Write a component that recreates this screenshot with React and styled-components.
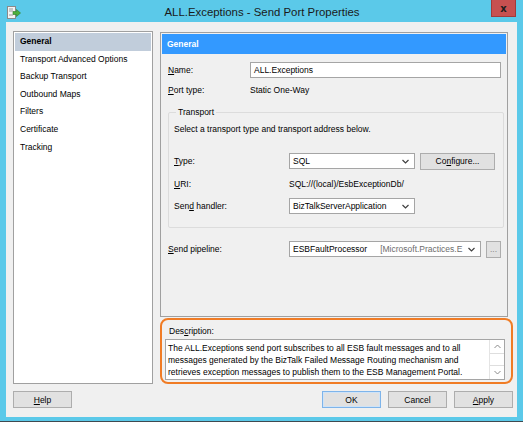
import React from 'react';
import styled, { createGlobalStyle } from 'styled-components';

const GlobalStyle = createGlobalStyle`
  html, body {
    margin: 0;
    padding: 0;
    background: #5bc9e9;
  }
  body {
    font-family: 'Liberation Sans', Arial, sans-serif;
    font-size: 8.5px;
    color: #000;
  }
`;

const Window = styled.div`
  width: 523px;
  height: 422px;
  box-sizing: border-box;
  background: #5bc9e9;
  padding: 0 6px 4px 6px;
  border-bottom: 1px solid #3f4a50;
  display: flex;
  flex-direction: column;
`;

const TitleBar = styled.div`
  height: 22px;
  display: flex;
  align-items: center;
  position: relative;
  flex-shrink: 0;
`;

const TitleIcon = styled.svg`
  width: 14px;
  height: 13px;
  margin: 2px 0 0 1px;
`;

const TitleText = styled.div`
  flex: 1;
  text-align: center;
  font-size: 11.4px;
  color: #1a1a1a;
  margin-top: 2px;
  padding-right: 14px;
`;

const CloseButton = styled.div`
  position: absolute;
  right: 1px;
  top: 0;
  width: 25px;
  height: 17px;
  background: #c75050;
  border: 1px solid #a23a3a;
  border-top: none;
  box-sizing: border-box;
  display: flex;
  align-items: center;
  justify-content: center;
  font-family: 'DejaVu Sans', sans-serif;
  font-weight: bold;
  font-size: 10px;
  color: #1e1e1e;
`;

const Content = styled.div`
  flex: 1;
  background: #f0f0f0;
  display: flex;
  flex-direction: column;
  padding: 9px 4px 0 7px;
`;

const MainRow = styled.div`
  display: flex;
  gap: 7px;
  height: 353px;
`;

const NavList = styled.div`
  width: 140px;
  box-sizing: border-box;
  background: #fff;
  border: 1px solid #a0a0a0;
  padding: 1px;
  display: flex;
  flex-direction: column;
`;

const NavItem = styled.div`
  height: 17.6px;
  line-height: 17.6px;
  padding-left: 5px;
  background: ${(p) => (p.$active ? '#c1cddb' : 'transparent')};
  font-weight: ${(p) => (p.$active ? 'bold' : 'normal')};
  white-space: nowrap;
`;

const RightColumn = styled.div`
  flex: 1;
  display: flex;
  flex-direction: column;
  padding-top: 1px;
`;

const PropsPanel = styled.div`
  width: 348px;
  height: 286px;
  box-sizing: border-box;
  border: 1px solid #a0a0a0;
  padding: 1px;
  display: flex;
  flex-direction: column;
`;

const PanelHeader = styled.div`
  height: 20px;
  background: #3399ff;
  color: #fff;
  font-weight: bold;
  line-height: 20px;
  padding-left: 5px;
  flex-shrink: 0;
`;

const PanelBody = styled.div`
  padding: 8px 5px 0 6px;
  display: flex;
  flex-direction: column;
`;

const Row = styled.div`
  display: flex;
  align-items: center;
  height: 16px;
  margin-top: ${(p) => p.$mt || 0}px;
`;

const Label = styled.div`
  width: ${(p) => p.$w}px;
  flex-shrink: 0;
  white-space: nowrap;
`;

const Value = styled.div`
  white-space: nowrap;
`;

const TextInput = styled.div`
  flex: 1;
  height: 16px;
  box-sizing: border-box;
  background: #fff;
  border: 1px solid #a5a5a5;
  line-height: 14px;
  padding-left: 3px;
`;

const SelectBox = styled.div`
  width: ${(p) => p.$w}px;
  height: 16px;
  box-sizing: border-box;
  background: #fff;
  border: 1px solid #a5a5a5;
  display: flex;
  align-items: center;
  padding: 0 5px 0 3px;
  white-space: nowrap;
`;

const SelectText = styled.span`
  flex: 1;
  display: flex;
`;

const Muted = styled.span`
  color: #6d6d6d;
  margin-left: ${(p) => p.$ml || 0}px;
`;

const Chevron = styled.svg`
  width: 7px;
  height: 5px;
  flex-shrink: 0;
  margin-left: 4px;
`;

const Button = styled.div`
  width: ${(p) => p.$w}px;
  height: 17px;
  box-sizing: border-box;
  background: #e1e1e1;
  border: 1px solid ${(p) => (p.$default ? '#7eb4ea' : '#adadad')};
  box-shadow: ${(p) => (p.$default ? 'inset 0 0 0 1px #cfe3f7' : 'none')};
  display: flex;
  align-items: center;
  justify-content: center;
  margin-left: ${(p) => p.$ml || 0}px;
  color: ${(p) => (p.$faint ? '#888' : '#000')};
`;

const Group = styled.fieldset`
  margin: 8px 0 0 0;
  padding: 5px 0 13px 5px;
  width: 336px;
  box-sizing: border-box;
  border: 1px solid #dcdcdc;
  border-radius: 2px;
`;

const Legend = styled.legend`
  padding: 0 2px;
  margin-left: 2px;
  line-height: 12px;
`;

const GroupText = styled.div`
  line-height: 12px;
  margin-bottom: 18px;
`;

const DescBox = styled.div`
  margin-top: 1px;
  height: 66px;
  box-sizing: border-box;
  border: 2px solid #f07c25;
  border-radius: 8px;
  padding: 5px 6px 0 3px;
  display: flex;
  flex-direction: column;
`;

const DescLabel = styled.div`
  padding-left: 4px;
  line-height: 12px;
  margin-bottom: 2px;
`;

const TextArea = styled.div`
  height: 41px;
  box-sizing: border-box;
  background: #fff;
  border: 1px solid #a5a5a5;
  display: flex;
`;

const TextAreaText = styled.div`
  flex: 1;
  padding: 2px 0 0 2px;
  line-height: 12px;
  white-space: nowrap;
`;

const ScrollBar = styled.div`
  width: 14px;
  display: flex;
  flex-direction: column;
  border-left: 1px solid #e4e4e4;
`;

const ScrollPart = styled.div`
  flex: ${(p) => (p.$grow ? 1 : '0 0 13px')};
  box-sizing: border-box;
  border: ${(p) => (p.$grow ? '1px solid #dedede' : 'none')};
  border-left: none;
  border-right: none;
  display: flex;
  align-items: center;
  justify-content: center;
`;

const ButtonRow = styled.div`
  display: flex;
  align-items: center;
  margin-top: 7px;
`;

const Spacer = styled.div`
  flex: 1;
`;

const U = styled.span`
  text-decoration: underline;
`;

const navItems = [
  'General',
  'Transport Advanced Options',
  'Backup Transport',
  'Outbound Maps',
  'Filters',
  'Certificate',
  'Tracking',
];

const Down = ({ color = '#404040' }) => (
  <Chevron viewBox="0 0 7 5">
    <path d="M0.5 1 L3.5 4 L6.5 1" fill="none" stroke={color} strokeWidth="1.2" />
  </Chevron>
);

export default function App() {
  return (
    <>
      <GlobalStyle />
      <Window>
        <TitleBar>
          <TitleIcon viewBox="0 0 14 13">
            <rect x="0.5" y="0.5" width="8" height="12" fill="#f4f4f4" stroke="#8a8a8a" />
            <line x1="2" y1="3" x2="6" y2="3" stroke="#9a9a9a" />
            <line x1="2" y1="5" x2="6" y2="5" stroke="#9a9a9a" />
            <line x1="2" y1="9" x2="6" y2="9" stroke="#9a9a9a" />
            <path d="M6 5.5 H9.5 V3.5 L13.5 7 L9.5 10.5 V8.5 H6 Z" fill="#4caf3c" stroke="#2f7d24" strokeWidth="0.6" />
          </TitleIcon>
          <TitleText>ALL.Exceptions - Send Port Properties</TitleText>
          <CloseButton>x</CloseButton>
        </TitleBar>
        <Content>
          <MainRow>
            <NavList>
              {navItems.map((item, i) => (
                <NavItem key={item} $active={i === 0}>
                  {item}
                </NavItem>
              ))}
            </NavList>
            <RightColumn>
              <PropsPanel>
                <PanelHeader>General</PanelHeader>
                <PanelBody>
                  <Row>
                    <Label $w={82}>
                      <U>N</U>ame:
                    </Label>
                    <TextInput>ALL.Exceptions</TextInput>
                  </Row>
                  <Row $mt={4}>
                    <Label $w={82}>
                      <U>P</U>ort type:
                    </Label>
                    <Value>Static One-Way</Value>
                  </Row>
                  <Group>
                    <Legend>Transport</Legend>
                    <GroupText>Select a transport type and transport address below.</GroupText>
                    <Row>
                      <Label $w={115}>
                        <U>T</U>ype:
                      </Label>
                      <SelectBox $w={126}>
                        <SelectText>SQL</SelectText>
                        <Down />
                      </SelectBox>
                      <Button $w={75} $ml={5}>
                        Co<U>n</U>figure...
                      </Button>
                    </Row>
                    <Row $mt={7}>
                      <Label $w={115}>
                        <U>U</U>RI:
                      </Label>
                      <Value>SQL://(local)/EsbExceptionDb/</Value>
                    </Row>
                    <Row $mt={6}>
                      <Label $w={115}>
                        Sen<U>d</U> handler:
                      </Label>
                      <SelectBox $w={126}>
                        <SelectText>BizTalkServerApplication</SelectText>
                        <Down />
                      </SelectBox>
                    </Row>
                  </Group>
                  <Row $mt={13}>
                    <Label $w={121}>
                      <U>S</U>end pipeline:
                    </Label>
                    <SelectBox $w={192}>
                      <SelectText>
                        ESBFaultProcessor
                        <Muted $ml={13}>[Microsoft.Practices.E</Muted>
                      </SelectText>
                      <Down />
                    </SelectBox>
                    <Button $w={15} $ml={5} $faint>
                      ...
                    </Button>
                  </Row>
                </PanelBody>
              </PropsPanel>
              <DescBox>
                <DescLabel>
                  Des<U>c</U>ription:
                </DescLabel>
                <TextArea>
                  <TextAreaText>
                    The ALL.Exceptions send port subscribes to all ESB fault messages and to all
                    <br />
                    messages generated by the BizTalk Failed Message Routing mechanism and
                    <br />
                    retrieves exception messages to publish them to the ESB Management Portal.
                  </TextAreaText>
                  <ScrollBar>
                    <ScrollPart>
                      <Chevron viewBox="0 0 7 5" style={{ margin: 0 }}>
                        <path d="M0.5 4 L3.5 1 L6.5 4" fill="none" stroke="#8a8a8a" strokeWidth="1" />
                      </Chevron>
                    </ScrollPart>
                    <ScrollPart $grow />
                    <ScrollPart>
                      <Chevron viewBox="0 0 7 5" style={{ margin: 0 }}>
                        <path d="M0.5 1 L3.5 4 L6.5 1" fill="none" stroke="#8a8a8a" strokeWidth="1" />
                      </Chevron>
                    </ScrollPart>
                  </ScrollBar>
                </TextArea>
              </DescBox>
            </RightColumn>
          </MainRow>
          <ButtonRow>
            <Button $w={59}>
              <U>H</U>elp
            </Button>
            <Spacer />
            <Button $w={59} $default>
              OK
            </Button>
            <Button $w={59} $ml={7}>
              Cancel
            </Button>
            <Button $w={59} $ml={7}>
              <U>A</U>pply
            </Button>
          </ButtonRow>
        </Content>
      </Window>
    </>
  );
}
